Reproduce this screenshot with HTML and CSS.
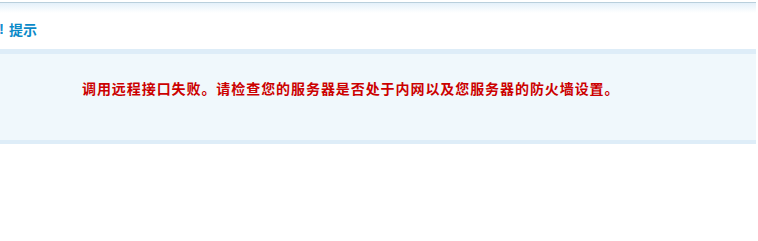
FILE: index.html
```html
<!DOCTYPE html>
<html lang="zh-CN">
<head>
<meta charset="utf-8">
<title>提示</title>
<link rel="stylesheet" href="styles.css">
</head>
<body>
<div class="box">
  <div class="hd">
    <span class="ico">!</span><span class="title">提示</span>
  </div>
  <div class="bd">
    <p class="msg">调用远程接口失败。请检查您的服务器是否处于内网以及您服务器的防火墙设置。</p>
  </div>
</div>
</body>
</html>
```
FILE: styles.css
```css
html, body {
  margin: 0;
  padding: 0;
  background: #fff;
}
body {
  font-family: "Noto Sans CJK SC", "Liberation Sans", sans-serif;
  font-size: 14px;
}
.box {
  width: 756px;
  padding-top: 2px;
}
.hd {
  height: 47px;
  border-top: 1px solid #b9cfdc;
  background: linear-gradient(#e4f0fa, #ffffff 10px);
  display: flex;
  align-items: center;
  box-sizing: border-box;
  padding-top: 5px;
}
.ico {
  color: #1a8fd0;
  font-weight: bold;
  font-size: 15px;
  font-family: "Liberation Sans", sans-serif;
  width: 4px;
  overflow: hidden;
  margin-left: -1px;
  margin-right: 6px;
  line-height: 15px;
}
.title {
  color: #0a8ac8;
  font-weight: bold;
  font-size: 14px;
  line-height: 20px;
}
.bd {
  border-top: 5px solid #deedf8;
  border-bottom: 4px solid #deedf8;
  background: #f0f8fc;
  box-sizing: border-box;
  height: 95px;
  padding: 24px 0 0 82px;
}
.msg {
  margin: 0;
  color: #cc0000;
  font-weight: bold;
  font-size: 14px;
  letter-spacing: 0.93px;
  line-height: 20px;
}
```
